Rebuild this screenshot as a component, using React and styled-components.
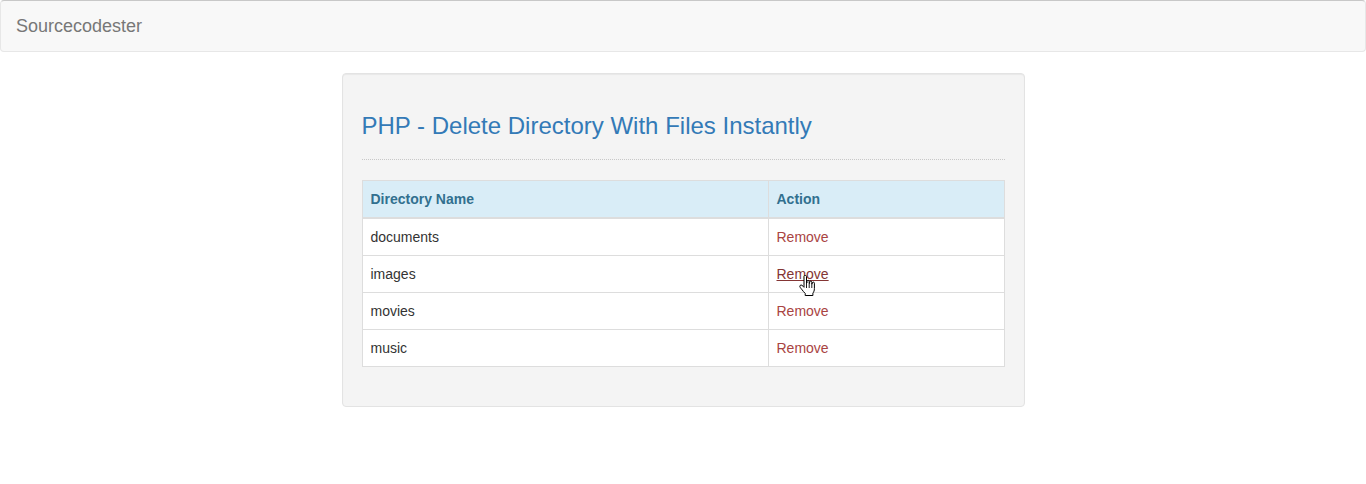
import styled, { createGlobalStyle } from "styled-components";

const Global = createGlobalStyle`
  html, body {
    margin: 0;
    padding: 0;
    background: #fff;
    font-family: "Liberation Sans", Arial, sans-serif;
    font-size: 14px;
    line-height: 1.42857;
    color: #333;
  }
  * { box-sizing: border-box; }
`;

const Navbar = styled.nav`
  height: 52px;
  background-color: #f8f8f8;
  border: 1px solid #e7e7e7;
  border-top-color: #c8c8c8;
  border-radius: 4px;
  margin-bottom: 21px;
  display: flex;
  align-items: center;
`;

const Brand = styled.a`
  padding: 15px;
  font-size: 18px;
  line-height: 20px;
  color: #777;
  text-decoration: none;
`;

const Well = styled.div`
  width: 683px;
  margin: 0 auto;
  padding: 19px;
  background-color: #f4f4f4;
  border: 1px solid #e3e3e3;
  border-radius: 4px;
  box-shadow: inset 0 1px 1px rgba(0, 0, 0, 0.05);
`;

const Title = styled.h3`
  margin: 20px 0 10px;
  font-size: 24px;
  font-weight: 500;
  line-height: 1.1;
  color: #337ab7;
`;

const Rule = styled.hr`
  margin: 20px 0;
  border: 0;
  border-top: 1px dotted #c8c8c8;
`;

const Table = styled.table`
  width: 100%;
  border-collapse: collapse;
  border: 1px solid #ddd;
  background: #fff;
  margin-bottom: 20px;

  th, td {
    padding: 8px;
    border: 1px solid #ddd;
    text-align: left;
    line-height: 20px;
    vertical-align: top;
  }
  thead th {
    border-bottom-width: 2px;
    background-color: #d9edf7;
    color: #31708f;
    font-weight: bold;
  }
`;

const NameCol = styled.th`
  width: 406px;
`;

const Cell = styled.td`
  position: relative;
`;

const RemoveLink = styled.a`
  color: ${(p) => (p.$hover ? "#843534" : "#a94442")};
  text-decoration: ${(p) => (p.$hover ? "underline" : "none")};
  cursor: pointer;
`;

const Pointer = styled.svg`
  position: absolute;
  left: 30px;
  top: 19px;
  pointer-events: none;
`;

const HandCursor = () => (
  <Pointer width="17" height="22" viewBox="0 0 17 22">
    <path
      d="M5 1.5c0-.8.6-1.3 1.2-1.3S7.5.7 7.5 1.5V8h.5V6.5c0-.8.5-1.2 1.1-1.2s1.1.4 1.1 1.2V8.5h.4V7.3c0-.8.5-1.2 1.1-1.2s1.1.4 1.1 1.2V9h.4V8.2c0-.7.5-1.1 1.1-1.1s1.1.4 1.1 1.1v5.3c0 2.2-.6 3.4-1.5 4.6V20.5H6.2v-2.1C5 17.3 3.8 15.8 2.6 14.2 1.8 13.1.8 12.3.8 11.3c0-.8.6-1.3 1.3-1.3.7 0 1.4.6 2 1.3L5 12.3z"
      fill="#fff"
      stroke="#000"
      strokeWidth="1"
      strokeLinejoin="round"
    />
    <path d="M7.5 8v5M10.2 8.5v4.5M12.8 9v4" stroke="#000" strokeWidth="0.9" />
  </Pointer>
);

const dirs = ["documents", "images", "movies", "music"];

export default function App() {
  return (
    <>
      <Global />
      <Navbar>
        <Brand>Sourcecodester</Brand>
      </Navbar>
      <Well>
        <Title>PHP - Delete Directory With Files Instantly</Title>
        <Rule />
        <Table>
          <thead>
            <tr>
              <NameCol>Directory Name</NameCol>
              <th>Action</th>
            </tr>
          </thead>
          <tbody>
            {dirs.map((d) => (
              <tr key={d}>
                <td>{d}</td>
                <Cell>
                  <RemoveLink $hover={d === "images"}>Remove</RemoveLink>
                  {d === "images" && <HandCursor />}
                </Cell>
              </tr>
            ))}
          </tbody>
        </Table>
      </Well>
    </>
  );
}
